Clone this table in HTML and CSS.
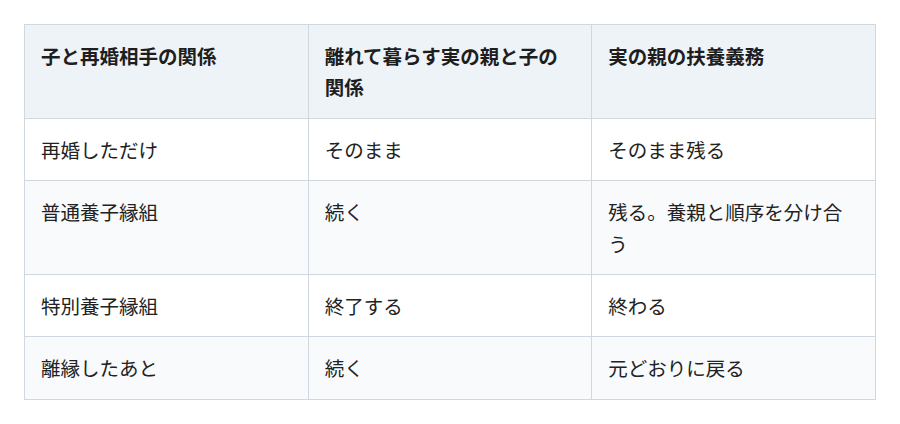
FILE: index.html
```html
<!DOCTYPE html>
<html lang="ja">
<head>
<meta charset="utf-8">
<link rel="stylesheet" href="styles.css">
</head>
<body>
<table class="tbl">
  <thead>
    <tr>
      <th>子と再婚相手の関係</th>
      <th>離れて暮らす実の親と子の関係</th>
      <th>実の親の扶養義務</th>
    </tr>
  </thead>
  <tbody>
    <tr>
      <td>再婚しただけ</td>
      <td>そのまま</td>
      <td>そのまま残る</td>
    </tr>
    <tr class="alt">
      <td>普通養子縁組</td>
      <td>続く</td>
      <td>残る。養親と順序を分け合う</td>
    </tr>
    <tr>
      <td>特別養子縁組</td>
      <td>終了する</td>
      <td>終わる</td>
    </tr>
    <tr class="alt">
      <td>離縁したあと</td>
      <td>続く</td>
      <td>元どおりに戻る</td>
    </tr>
  </tbody>
</table>
</body>
</html>
```
FILE: styles.css
```css
html, body {
  margin: 0;
  padding: 0;
  background: #ffffff;
}
body {
  padding: 24px;
  font-family: "Noto Sans CJK JP", "Noto Sans", sans-serif;
  color: #222222;
}
.tbl {
  width: 852px;
  border-collapse: collapse;
  table-layout: fixed;
  font-size: 19.5px;
  line-height: 31.4px;
}
.tbl th,
.tbl td {
  border: 1px solid #cfd7e1;
  padding: 15px 16px;
  text-align: left;
  vertical-align: top;
}
.tbl th {
  background: #eef3f8;
  font-weight: 700;
  color: #1e1e1e;
}
.tbl tr.alt td {
  background: #f8fafc;
}
```
